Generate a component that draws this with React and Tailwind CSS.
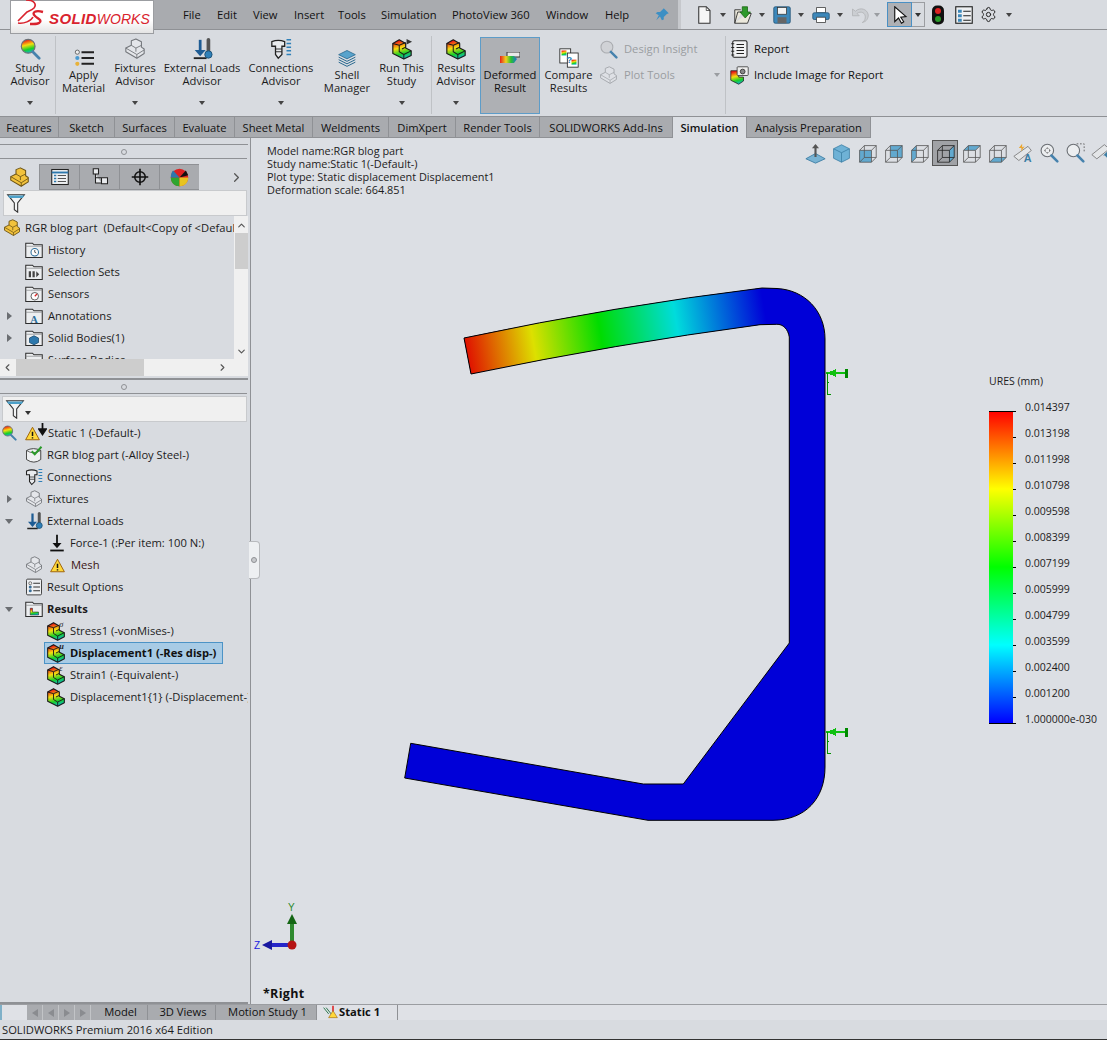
import React from 'react';
import { ChevronLeft, ChevronRight, ChevronUp, ChevronDown, Settings } from 'lucide-react';

const FONT = "font-['Open_Sans','Noto_Sans',sans-serif]";

function Svg({ w = 22, h = 22, vb = '0 0 24 24', className = '', children }) {
  return (
    <svg width={w} height={h} viewBox={vb} className={`shrink-0 ${className}`} fill="none">
      {children}
    </svg>
  );
}

// The L shaped block SOLIDWORKS uses in most of its part icons.
function Block({ fill = '#f2c23c', stroke = '#6d5415', w = 20, h = 20, className = '', children }) {
  return (
    <Svg w={w} h={h} className={className}>
      <path d="M2 11 8 8V3l5-2 6 3v6l3 2v5l-8 5-12-7z" fill={fill} stroke={stroke} strokeWidth="1.2" strokeLinejoin="round" />
      <path d="M2 11l12 7v4M14 18l8-5M8 8l5 3 6-3M13 11v4" stroke={stroke} strokeWidth="1" />
      {children}
    </Svg>
  );
}

const Rainbow = ({ w = 20, h = 20, badge, play }) => (
  <Svg w={w} h={h}>
    <path d="M2 6l7-4 7 4v5l6 3v5l-8 4-12-6z" fill="url(#rb)" stroke="#1a1a1a" strokeWidth="1.3" strokeLinejoin="round" />
    <path d="M9 8l7-3M9 8v7l5 3v5M14 18l8-4M9 8 2 6M12 12l4-2" stroke="#1a1a1a" strokeWidth="1.1" />
    {badge && (
      <text x="16" y="7" fontSize="10" fontStyle="italic" fill="#222" fontFamily="Liberation Serif">
        {badge}
      </text>
    )}
    {play && <path d="M17 1l6 3-6 3z" fill="#333" />}
  </Svg>
);

const GrayBlock = ({ w = 20, h = 20, opacity = 1 }) => (
  <Block fill="#e4e6ea" stroke="#74777c" w={w} h={h} className={opacity < 1 ? 'opacity-50' : ''} />
);

const Warning = ({ size = 16 }) => (
  <Svg w={size} h={size}>
    <path d="M12 2 23 22H1z" fill="#ffd83a" stroke="#a0660c" strokeWidth="1.6" strokeLinejoin="round" />
    <path d="M12 9v7M12 18v2" stroke="#111" strokeWidth="2.4" />
  </Svg>
);

const Folder = ({ children }) => (
  <Svg w={18} h={18}>
    <path d="M1 22V3h9l2 2h11v17z" fill="#eceef0" stroke="#2d2d2d" strokeWidth="1.4" />
    <path d="M1 7h22" stroke="#8b8d90" strokeWidth="1" />
    {children}
  </Svg>
);

const DownForce = () => (
  <>
    <path d="M10 2v14" stroke="#1e5c94" strokeWidth="3" />
    <path d="M4 13h12l-6 7z" fill="#1e5c94" />
    <path d="M3 22h14" stroke="#222" strokeWidth="2" />
  </>
);

const LoadsIcon = ({ size = 22 }) => (
  <Svg w={size} h={size}>
    <DownForce />
    <path d="M19 2v13" stroke="#555" strokeWidth="4" strokeLinecap="round" />
    <circle cx="19" cy="18" r="4" fill="#2f80b8" stroke="#1d4f73" />
  </Svg>
);

const BoltIcon = ({ size = 22 }) => (
  <Svg w={size} h={size}>
    <path d="M2 4q7-3 14 0v5h-3v9l-4 4-3-4V9H2z" fill="#e9ebee" stroke="#222" strokeWidth="1.4" />
    <path d="M6 12h7M6 15h7" stroke="#222" />
    <path d="M18 2h5M18 6h5M18 10h5M18 14h5M18 18h5" stroke="#2f80b8" strokeWidth="1.6" />
  </Svg>
);

const OptionsList = ({ size = 18, color = '#3b6f98' }) => (
  <Svg w={size} h={size}>
    <rect x="2" y="1.5" width="20" height="21" rx="1.5" fill="#eef0f2" stroke="#333" strokeWidth="1.2" />
    <circle cx="7" cy="7" r="2" fill="#eee" stroke="#555" />
    <circle cx="7" cy="12" r="2" fill={color} />
    <circle cx="7" cy="17" r="2" fill={color} />
    <path d="M11 7h9M11 12h9M11 17h9" stroke="#333" strokeWidth="1.4" />
  </Svg>
);

const Magnifier = ({ size = 22, lens = 'url(#rb)', stroke = '#6b6f74', children }) => (
  <Svg w={size} h={size}>
    <circle cx="10" cy="9" r="7.5" fill={lens} stroke={stroke} strokeWidth="1.3" />
    <path d="M15 15l7 7" stroke="#4682ad" strokeWidth="3" strokeLinecap="round" />
    {children}
  </Svg>
);

const RIBBON = [
  { w: 55, pad: 5, lines: ['Study', 'Advisor'], drop: true, sep: true, icon: <Magnifier /> },
  {
    w: 55, lines: ['Apply', 'Material'],
    icon: (
      <Svg w={22} h={20}>
        <circle cx="4" cy="5" r="2.5" fill="#eee" stroke="#555" />
        <circle cx="4" cy="12" r="2.5" fill="#4a9ad0" />
        <circle cx="4" cy="19" r="2.5" fill="#e8b23a" />
        <path d="M9 5h15M9 12h15M9 19h15" stroke="#222" strokeWidth="2.4" />
      </Svg>
    ),
  },
  { w: 48, lines: ['Fixtures', 'Advisor'], drop: true, icon: <GrayBlock w={22} h={22} /> },
  { w: 86, lines: ['External Loads', 'Advisor'], drop: true, icon: <LoadsIcon /> },
  { w: 72, lines: ['Connections', 'Advisor'], drop: true, icon: <BoltIcon /> },
  {
    w: 60, lines: ['Shell', 'Manager'],
    icon: (
      <Svg w={20} h={20}>
        <path d="M12 3l10 5-10 5L2 8z" fill="#58a3cc" stroke="#2b6a90" />
        <path d="M2 11l10 5 10-5M2 14l10 5 10-5M2 17l10 5 10-5" stroke="#2b6a90" strokeWidth="1.2" />
      </Svg>
    ),
  },
  { w: 49, lines: ['Run This', 'Study'], drop: true, sep: true, extra: 5, icon: <Rainbow w={22} h={22} play /> },
  { w: 48, lines: ['Results', 'Advisor'], drop: true, icon: <Rainbow w={22} h={22} /> },
];

function RibbonItem({ w, pad = 0, lines, drop, icon, extra = 0, sep }) {
  return (
    <div className="flex h-full shrink-0 items-start" style={{ width: w + extra + (sep ? 1 : 0) }}>
      <div
        className={`flex flex-col items-center ${drop ? 'pt-[7px]' : 'pt-[16px]'}`}
        style={{ width: w, paddingLeft: pad }}
      >
        <div className="flex h-[24px] items-center">{icon}</div>
        <div className={`whitespace-nowrap text-center text-[11.2px] leading-[13px] text-[#1c1c1c] ${drop ? '' : '-mt-[2.5px]'}`}>
          {lines.map((l) => (
            <div key={l}>{l}</div>
          ))}
        </div>
        {drop && <div className="mt-[14px] h-0 w-0 border-x-[3.5px] border-t-[4px] border-x-transparent border-t-[#444]" />}
      </div>
      {sep && <div className="ml-auto mt-[6px] h-[78px] w-px bg-[#bfc2c6]" />}
    </div>
  );
}

const SMALL_TOOLS = [
  { label: 'Design Insight', icon: <Magnifier size={19} lens="#d0d2d6" stroke="#aaacb0" /> },
  { label: 'Plot Tools', icon: <GrayBlock w={19} h={19} opacity={0.6} />, arrow: true },
];

const TABS = [
  ['Features', 59], ['Sketch', 56], ['Surfaces', 60], ['Evaluate', 60], ['Sheet Metal', 78],
  ['Weldments', 76], ['DimXpert', 67], ['Render Tools', 84], ['SOLIDWORKS Add-Ins', 133],
  ['Simulation', 74, true], ['Analysis Preparation', 124],
];

const MENU = [
  ['File', 34], ['Edit', 36], ['View', 41], ['Insert', 44], ['Tools', 43],
  ['Simulation', 71], ['PhotoView 360', 94], ['Window', 59], ['Help', 40],
];

function Caret({ color = '#444' }) {
  return <div className="h-0 w-0 border-x-[3.5px] border-t-[4px] border-x-transparent" style={{ borderTopColor: color }} />;
}

function Logo() {
  return (
    <div className="relative z-10 ml-[10px] flex h-[34px] w-[144px] shrink-0 items-center border border-[#9b9da1] bg-[linear-gradient(to_bottom,#ffffff_60%,#e4e4e4)] pl-[5px]">
      <Svg w={30} h={30} vb="16 0 30 30" className="-mt-[6px]">
        <path d="M26 1C34 1 37 5 34 9 32 11 29 12 27 13L18 22" stroke="#d9232e" strokeWidth="1.6" />
        <path d="M18 24C24 25 31 22 33 18" stroke="#d9232e" strokeWidth="1.6" />
        <path d="M43 13C36 11 31 13 35 17 38 20 43 21 39 24 37 25.5 33 25 30 25" stroke="#d9232e" strokeWidth="2.4" />
      </Svg>
      <span className="ml-[3px] mt-[3px] whitespace-nowrap leading-none text-[#d9232e] font-['Liberation_Sans',sans-serif]">
        <span className="text-[15px] font-bold italic tracking-[0.4px]">SOLID</span>
        <span className="text-[14px] italic">WORKS</span>
      </span>
    </div>
  );
}

function QuickTool({ children }) {
  return (
    <div className="flex w-[39px] shrink-0 items-center gap-[7px]">
      <Svg w={18} h={18}>{children}</Svg>
      <Caret />
    </div>
  );
}

function TopBar() {
  return (
    <div className="flex h-[30px] shrink-0 border-b border-[#8f9195] bg-[#d8dbe0]">
      <Logo />
      <div className="flex w-[524px] shrink-0 items-center bg-[#a9abaf] pl-[29px]">
        {MENU.map(([m, w]) => (
          <div key={m} className="shrink-0 pt-[1px] text-[11.2px] text-[#111]" style={{ width: w }}>
            {m}
          </div>
        ))}
        <Svg w={15} h={15} className="ml-[10px]">
          <path d="M14 2l8 8-3 1-5 5 0 4-3 1-3-6-6 6 4-8-5-3 3-2 4 0 5-5z" fill="#3c8fc4" />
        </Svg>
      </div>
      <div className="w-[3px] bg-[#c6c8cc]" />
      <div className="flex items-center pl-[14px]">
        <QuickTool>
          <path d="M5 1h10l5 5v17H5z" fill="#f6f6f6" stroke="#333" strokeWidth="1.4" />
          <path d="M15 1v5h5" stroke="#333" />
        </QuickTool>
        <QuickTool>
          <path d="M1 23 5 8h6M1 23V5h8M1 23h17l5-13h-6" fill="#ece9dc" stroke="#333" strokeWidth="1.2" />
          <path d="M11 1h7v7h4l-7 8-7-8h3z" fill="#2f9a2a" stroke="#16620f" />
        </QuickTool>
        <QuickTool>
          <rect x="1" y="1" width="22" height="22" rx="2" fill="#3d88ba" stroke="#1e4f72" />
          <rect x="6" y="2" width="12" height="9" fill="#f2f2f2" stroke="#333" />
          <rect x="6" y="15" width="12" height="8" fill="#666" />
        </QuickTool>
        <QuickTool>
          <path d="M6 2h12v7H6z" fill="#fff" stroke="#333" />
          <rect x="1" y="9" width="22" height="9" rx="2" fill="#3d88ba" stroke="#1e4f72" />
          <path d="M6 15h12v7H6z" fill="#fff" stroke="#333" />
        </QuickTool>
        <div className="flex w-[36px] shrink-0 items-center gap-[5px]">
          <Svg w={18} h={18} className="opacity-50">
            <path d="M2 4v9h9L8 10c5-4 12-1 11 6-.5 3-2 5-4 6 6-1 8-6 8-10C22 4 12 1 6 7z" fill="#bfc2c6" stroke="#888" />
          </Svg>
          <Caret color="#9a9da1" />
        </div>
        <div className="flex h-[25px] items-stretch">
          <div className="flex w-[25px] items-center justify-center border border-[#4a90c4] bg-[#aeb0b4]">
            <Svg w={18} h={18}>
              <path d="M5 1v20l5-5 4 7 3-2-4-6 7-1z" fill="#fff" stroke="#111" strokeWidth="1.5" />
            </Svg>
          </div>
          <div className="flex w-[13px] items-center justify-center border border-l-0 border-[#9b9da1]">
            <Caret color="#333" />
          </div>
        </div>
        <Svg w={14} h={20} vb="0 0 14 20" className="ml-[6px]">
          <rect x="1" y="0.5" width="12" height="19" rx="5" fill="#111" />
          <circle cx="7" cy="6" r="3" fill="#d22" />
          <circle cx="7" cy="14" r="3" fill="#2a9a2a" />
        </Svg>
        <Svg w={18} h={18} className="ml-[10px]">
          <rect x="1" y="1" width="22" height="22" fill="#eef0f2" stroke="#222" strokeWidth="1.5" />
          <path d="M4 5h5v4H4zM4 11h5v4H4zM4 17h5v4H4z" fill="#3d88ba" />
          <path d="M11 7h10M11 13h10M11 19h10" stroke="#222" strokeWidth="1.5" />
        </Svg>
        <Settings size={17} strokeWidth={1.4} className="ml-[7px] text-[#222]" />
        <div className="ml-[9px]"><Caret /></div>
      </div>
    </div>
  );
}

function Ribbon() {
  return (
    <div className="flex h-[86px] shrink-0 bg-[#d8dbe0]">
      {RIBBON.map((r) => (
        <RibbonItem key={r.lines.join()} {...r} />
      ))}
      <div className="mt-[7px] flex h-[77px] w-[60px] shrink-0 flex-col items-center border border-[#5d9cc8] bg-[#aeb0b4] pt-[8px]">
        <div className="flex h-[24px] items-center">
          <svg width="20" height="12" viewBox="0 0 20 12" className="shrink-0">
            <rect x="7" y="0" width="13" height="5" fill="#e8e8e8" stroke="#333" />
            <path d="M0 4h14l3 3-3 4H0z" fill="url(#rbh)" />
          </svg>
        </div>
        <div className="-mt-[2.5px] text-center text-[11.2px] leading-[13px] text-[#111]">
          <div>Deformed</div>
          <div>Result</div>
        </div>
      </div>
      <div className="flex w-[58px] shrink-0 flex-col items-center pr-[1px] pt-[16px]">
        <div className="flex h-[24px] items-center">
          <Svg w={20} h={22}>
            <rect x="1" y="1" width="13" height="17" fill="#fff" stroke="#222" />
            <rect x="10" y="6" width="13" height="17" fill="#fff" stroke="#222" />
            <rect x="3" y="3" width="6" height="6" fill="url(#rb)" />
            <rect x="15" y="14" width="6" height="6" fill="url(#rb)" />
            <text x="9" y="18" fontSize="11" fontWeight="bold" fill="#2a7fb8" fontFamily="Liberation Sans">?</text>
          </Svg>
        </div>
        <div className="-mt-[2.5px] text-center text-[11.2px] leading-[13px] text-[#1c1c1c]">
          <div>Compare</div>
          <div>Results</div>
        </div>
      </div>
      <div className="relative flex w-[127px] shrink-0 flex-col gap-[8px] pl-[1px] pt-[10px]">
        {SMALL_TOOLS.map((t) => (
          <div key={t.label} className="flex h-[18px] items-center gap-[6px] text-[11.2px] text-[#9a9da1]">
            {t.icon}
            <span>{t.label}</span>
            {t.arrow && <div className="ml-auto mr-[5px]"><Caret color="#9a9da1" /></div>}
          </div>
        ))}
      </div>
      <div className="mt-[6px] h-[78px] w-px shrink-0 bg-[#bfc2c6]" />
      <div className="flex flex-col gap-[8px] pl-[4px] pt-[10px]">
        <div className="flex h-[18px] items-center gap-[5px] text-[11.2px] text-[#111]">
          <Svg w={19} h={18}>
            <rect x="3" y="1" width="19" height="22" rx="2" fill="#f2f3f4" stroke="#222" strokeWidth="1.4" />
            <path d="M8 6h10M8 10h10M8 14h10M8 18h10" stroke="#222" strokeWidth="1.4" />
            <path d="M1 5h4M1 10h4M1 15h4M1 20h4" stroke="#222" strokeWidth="1.4" />
          </Svg>
          <span>Report</span>
        </div>
        <div className="flex h-[18px] items-center gap-[5px] text-[11.2px] text-[#111]">
          <Svg w={19} h={19}>
            <path d="M1 6h10v8h6v5l-6 4-10-5z" fill="url(#rb)" stroke="#222" />
            <rect x="9" y="1" width="14" height="11" rx="1" fill="#eee" stroke="#333" />
            <circle cx="16" cy="7" r="3" fill="#888" stroke="#222" />
          </Svg>
          <span>Include Image for Report</span>
        </div>
      </div>
    </div>
  );
}

function Tabs() {
  return (
    <div className="flex h-[22px] shrink-0 border-t border-[#8f9195] bg-[#dcdfe4]">
      {TABS.map(([t, w, active]) => (
        <div
          key={t}
          style={{ width: w }}
          className={`flex shrink-0 items-center justify-center whitespace-nowrap border-r pt-[2px] text-[11.2px] ${
            active
              ? 'border-[#8f9195] bg-[#dcdfe4] font-semibold text-[#111]'
              : 'border-b border-[#8f9195] bg-[#a9abaf] text-[#111]'
          }`}
        >
          {t}
        </div>
      ))}
    </div>
  );
}

function GripRow({ className = '' }) {
  return (
    <div className={`flex items-center justify-center ${className}`}>
      <div className="h-[6px] w-[6px] rounded-full border border-[#8f9195]" />
    </div>
  );
}

function Row({ arrow, indent = 25, icon, text, bold, color }) {
  return (
    <div className="relative flex h-[22px] items-center whitespace-nowrap text-[11.2px] text-[#1c1c1c]">
      {arrow === 'right' && <div className="absolute left-[7px] h-0 w-0 border-y-[4px] border-l-[5px] border-y-transparent border-l-[#6b6e72]" />}
      {arrow === 'down' && <div className="absolute left-[5px] h-0 w-0 border-x-[4.5px] border-t-[5px] border-x-transparent border-t-[#6b6e72]" />}
      <div className="flex shrink-0 items-center" style={{ marginLeft: indent }}>
        {icon}
      </div>
      <span className={`ml-[4px] ${bold ? 'font-bold' : ''}`} style={color ? { color } : undefined}>
        {text}
      </span>
    </div>
  );
}

const FEATURE_ROWS = [
  {
    text: 'History',
    glyph: (
      <>
        <circle cx="13" cy="15" r="5" fill="#fff" stroke="#2d6f9c" strokeWidth="1.4" />
        <path d="M13 12v3l2 1" stroke="#222" />
      </>
    ),
  },
  { text: 'Selection Sets', glyph: <path d="M5 11h3v8H5zM10 11h3v8h-3zM15 11l4 4-4 4z" fill="#444" /> },
  {
    text: 'Sensors',
    glyph: (
      <>
        <circle cx="13" cy="15" r="5" fill="#fff" stroke="#333" />
        <path d="M13 15l3-3" stroke="#d22" strokeWidth="1.6" />
      </>
    ),
  },
  {
    text: 'Annotations', arrow: 'right',
    glyph: <text x="7" y="21" fontSize="14" fontWeight="bold" fill="#2d6f9c" fontFamily="Liberation Serif">A</text>,
  },
  {
    text: 'Solid Bodies(1)', arrow: 'right',
    glyph: <path d="M12 9l6 3v6l-6 3-6-3v-6z" fill="#2d78ad" stroke="#18486b" />,
  },
  { text: 'Surface Bodies', glyph: <path d="M6 20l6-8 7 3-4 6z" fill="#8bb8d6" stroke="#2d6f9c" /> },
];

function FeatureTree() {
  return (
    <div className="relative h-[160px] shrink-0 overflow-hidden">
      <div className="h-[143px] overflow-hidden pr-[14px] pt-[1px]">
        <div className="flex h-[22px] items-center whitespace-nowrap pl-[3px] text-[11.2px] text-[#1c1c1c]">
          <Block w={18} h={18} />
          <span className="ml-[4px] overflow-hidden tracking-[0.05px]">RGR blog part&nbsp;&nbsp;(Default&lt;Copy of &lt;Default</span>
        </div>
        {FEATURE_ROWS.map((r) => (
          <Row
            key={r.text}
            arrow={r.arrow}
            text={<span className="ml-[1px]">{r.text}</span>}
            icon={<Folder>{r.glyph}</Folder>}
          />
        ))}
      </div>
      {/* vertical scrollbar */}
      <div className="absolute right-0 top-0 flex h-[143px] w-[14px] flex-col items-center justify-between bg-[#f0f0f0]">
        <ChevronUp size={11} strokeWidth={2.5} className="mt-[4px] text-[#555]" />
        <ChevronDown size={11} strokeWidth={2.5} className="mb-[2px] text-[#555]" />
      </div>
      <div className="absolute right-0 top-[17px] h-[36px] w-[13px] bg-[#cdcdcd]" />
      {/* horizontal scrollbar */}
      <div className="absolute bottom-0 left-0 flex h-[17px] w-full items-center bg-[#f0f0f0]">
        <ChevronLeft size={11} strokeWidth={2.5} className="ml-[2px] text-[#555]" />
        <div className="ml-[3px] h-full w-[128px] bg-[#cdcdcd]" />
        <ChevronRight size={11} strokeWidth={2.5} className="ml-[73px] text-[#555]" />
      </div>
    </div>
  );
}

function ManagerTabs() {
  return (
    <div className="flex h-[26px] shrink-0 items-stretch">
      <div className="flex w-[39px] items-center justify-center"><Block w={21} h={21} /></div>
      {[
        <Svg key="a" w={18} h={18}>
          <rect x="1" y="2" width="22" height="20" fill="#eef0f2" stroke="#222" strokeWidth="1.4" />
          <path d="M1 6h22" stroke="#2d78ad" strokeWidth="2.5" />
          <path d="M4 10h3M4 14h3M4 18h3" stroke="#2d78ad" strokeWidth="2" />
          <path d="M9 10h11M9 14h11M9 18h11" stroke="#222" />
        </Svg>,
        <Svg key="b" w={18} h={18}>
          <path d="M3 1h7v7H3zM14 13h8v8h-8zM6 8v12h8M6 13h8" fill="#e8eaed" stroke="#222" strokeWidth="1.4" />
        </Svg>,
        <Svg key="c" w={18} h={18}>
          <circle cx="12" cy="12" r="7" stroke="#111" strokeWidth="2" />
          <path d="M12 1v22M1 12h22" stroke="#111" strokeWidth="2.2" />
        </Svg>,
        <Svg key="d" w={19} h={19}>
          <circle cx="12" cy="12" r="11" fill="#d22" />
          <path d="M12 12 20 3l3 6z" fill="#111" />
          <path d="M12 12H1c0 7 5 11 11 11z" fill="#2fa52f" />
          <path d="M12 12h11c0 7-5 11-11 11z" fill="#e8c420" />
          <path d="M12 12 4 3c-2 2-3 5-3 9z" fill="#2d78ad" />
        </Svg>,
      ].map((icon, i) => (
        <div key={i} className="flex w-[40px] items-center justify-center border-y border-l border-[#8f9195] bg-[#a9abaf] last:border-r">
          {icon}
        </div>
      ))}
      <div className="ml-auto mr-[3px] flex items-center">
        <ChevronRight size={15} strokeWidth={2} className="text-[#555]" />
      </div>
    </div>
  );
}

const FilterFunnel = ({ size = 20 }) => (
  <Svg w={size} h={size}>
    <path d="M2 2h20l-8 10v11l-4-3v-8z" fill="#f3f4f5" stroke="#333" strokeWidth="1.3" />
    <path d="M2 3h20l-2 3H4z" fill="#4da0c8" />
  </Svg>
);

function SimulationTree() {
  return (
    <div className="mr-[2px] overflow-hidden">
      <div className="relative flex h-[22px] items-center whitespace-nowrap text-[11.2px] text-[#1c1c1c]">
        <div className="ml-[1px] flex w-[24px]"><Magnifier size={16} /></div>
        <Warning size={15} />
        <Svg w={9} h={14} vb="0 0 10 16" className="-ml-[2px] -mt-[7px]">
          <path d="M5 0v9M1 7h8L5 13z" stroke="#111" strokeWidth="2" fill="#111" />
        </Svg>
        <span className="ml-[1px]">Static 1 (-Default-)</span>
      </div>
      <Row
        text="RGR blog part (-Alloy Steel-)"
        icon={
          <Svg w={18} h={18}>
            <path d="M2 6q9-5 19 0v12q-9 7-19 0z" fill="#eef0f2" stroke="#444" strokeWidth="1.3" />
            <path d="M2 6q9 6 19 0" stroke="#444" />
            <path d="M9 7l4 4 9-10" stroke="#2a9a2a" strokeWidth="2.6" />
          </Svg>
        }
      />
      <Row text="Connections" icon={<BoltIcon size={18} />} />
      <Row text="Fixtures" arrow="right" icon={<GrayBlock w={18} h={18} />} />
      <Row text="External Loads" arrow="down" icon={<LoadsIcon size={18} />} />
      <Row
        indent={48}
        text="Force-1 (:Per item: 100 N:)"
        icon={
          <Svg w={18} h={18}>
            <path d="M12 1v15" stroke="#111" strokeWidth="2.4" />
            <path d="M6 12h12l-6 7z" fill="#111" />
            <path d="M3 22h18" stroke="#111" strokeWidth="2.4" />
          </Svg>
        }
      />
      <div className="flex h-[22px] items-center text-[11.2px] text-[#3a1414]">
        <div className="ml-[25px] w-[25px]"><GrayBlock w={18} h={18} /></div>
        <Warning size={15} />
        <span className="ml-[6px]">Mesh</span>
      </div>
      <Row text="Result Options" icon={<OptionsList />} />
      <Row
        text="Results"
        bold
        arrow="down"
        icon={
          <Folder>
            <path d="M7 11h3v5h8v4H7z" fill="url(#rb)" stroke="#222" strokeWidth=".7" />
          </Folder>
        }
      />
      <Row indent={46} text="Stress1 (-vonMises-)" icon={<Rainbow badge="σ" />} />
      <div className="ml-[44px] flex h-[22px] w-[179px] items-center whitespace-nowrap border border-[#4c93c6] bg-[#a8cbe5] pl-[1px] text-[11.2px] font-bold text-[#111]">
        <Rainbow badge="u" />
        <span className="ml-[4px]">Displacement1 (-Res disp-)</span>
      </div>
      <Row indent={46} text="Strain1 (-Equivalent-)" icon={<Rainbow badge="ε" />} />
      <Row indent={46} text="Displacement1{1} (-Displacement-)" icon={<Rainbow />} />
    </div>
  );
}

function LeftPanel() {
  return (
    <div className="relative z-10 flex w-[251px] shrink-0 flex-col border-r border-[#8f9195] bg-[#d8dbe0]">
      <div className="mr-[2px] h-[7px] border-b border-[#8f9195]" />
      <GripRow className="mr-[3px] h-[14px] border-b border-[#8f9195]" />
      <div className="mr-[3px] mt-[5px]"><ManagerTabs /></div>
      <div className="ml-[3px] mr-[3px] flex h-[26px] shrink-0 items-center border border-[#c8cacd] bg-[#f0f0f0] pl-[2px]">
        <FilterFunnel />
      </div>
      <div className="mr-[2px]"><FeatureTree /></div>
      <div className="mr-[2px] mt-[2px] h-[2px] bg-[#8f9195]" />
      <GripRow className="mr-[3px] h-[14px] border-b border-[#8f9195]" />
      <div className="ml-[2px] mr-[3px] mt-[2px] flex h-[26px] shrink-0 items-center border border-[#c8cacd] bg-[#f0f0f0] pl-[2px]">
        <FilterFunnel />
        <div className="mt-[8px]"><Caret color="#333" /></div>
      </div>
      <SimulationTree />
      <div className="mt-auto mr-[2px] h-[2px] bg-[#8f9195]" />
      {/* handle that collapses the panel */}
      <div className="absolute left-[249px] top-[403px] flex h-[38px] w-[11px] items-center justify-center rounded-r-sm border border-l-0 border-[#b8babd] bg-[#eef0f2]">
        <div className="h-[6px] w-[6px] rounded-full border border-[#8f9195] bg-[#c8cacd]" />
      </div>
    </div>
  );
}

// Wireframe cube of the view toolbar, `face` is the one that is painted.
function Cube({ face, dark }) {
  const s = dark ? '#222' : '#555';
  const faces = {
    front: 'M2 8h15v15H2z',
    back: 'M8 2h15v15H8z',
    left: 'M2 8l6-6v15l-6 6z',
    right: 'M17 8l6-6v15l-6 6z',
    top: 'M2 8l6-6h15l-6 6z',
    bottom: 'M2 23l6-6h15l-6 6z',
  };
  return (
    <Svg w={19} h={19}>
      <path d={faces[face]} fill="#62a9cf" />
      <path d="M2 8h15v15H2zM8 2h15v15H8zM2 8l6-6M17 8l6-6M2 23l6-6M17 23l6-6" stroke={s} strokeWidth="1" />
    </Svg>
  );
}

function ViewBar() {
  const items = [
    <Svg key="plane" w={21} h={21}>
      <path d="M1 18l11-6 11 6-11 5z" fill="#79b3d3" stroke="#3c7da3" />
      <path d="M12 16V3" stroke="#555" strokeWidth="2.4" />
      <path d="M8 6l4-5 4 5z" fill="#555" />
    </Svg>,
    <Svg key="solid" w={19} h={19}>
      <path d="M12 1l10 5v12l-10 5-10-5V6z" fill="#6fb2d6" stroke="#3a7da4" />
      <path d="M2 6l10 5 10-5M12 11v12" stroke="#3a7da4" />
    </Svg>,
    <Cube key="1" face="front" />,
    <Cube key="2" face="back" />,
    <Cube key="3" face="left" />,
    <Cube key="4" face="right" dark />,
    <Cube key="5" face="top" />,
    <Cube key="6" face="bottom" />,
    <Svg key="hl" w={20} h={20}>
      <path d="M1 16l17-12 4 5-15 12z" fill="#e4e6e8" stroke="#777" />
      <path d="M7 6l4-5 0 4 3-1-4 6 0-4z" fill="#eba52d" />
      <text x="13" y="23" fontSize="13" fontWeight="bold" fill="#3c7da3" fontFamily="Liberation Sans">A</text>
    </Svg>,
    <Magnifier key="m1" size={20} lens="#eceef0">
      <path d="M10 5l2 2H8zM10 13l2-2H8zM6 9l2-2v4zM14 9l-2-2v4z" fill="#777" />
    </Magnifier>,
    <Magnifier key="m2" size={20} lens="#eceef0">
      <path d="M14 1h9v9" stroke="#555" strokeDasharray="2 2" />
    </Magnifier>,
    <Svg key="cut" w={20} h={20}>
      <path d="M1 14l15-12 6 5-15 12z" fill="#e4e6e8" stroke="#777" />
      <path d="M24 14h-7l4-4M17 14l4 4" stroke="#3c7da3" strokeWidth="2" />
    </Svg>,
  ];
  return (
    <div className="absolute left-[551px] top-[2px] flex h-[26px] items-center">
      {items.map((it, i) => (
        <div
          key={i}
          className={`flex h-[26px] w-[26px] shrink-0 items-center justify-center ${
            i === 5 ? 'border border-[#555] bg-[#a0a2a6]' : ''
          }`}
        >
          {it}
        </div>
      ))}
    </div>
  );
}

const LEGEND = [
  '0.014397', '0.013198', '0.011998', '0.010798', '0.009598', '0.008399', '0.007199',
  '0.005999', '0.004799', '0.003599', '0.002400', '0.001200', '1.000000e-030',
];

function Legend() {
  return (
    <div className="absolute left-[738px] top-[236px] w-[115px] text-[#1c1c1c]">
      <div className="pt-[1px] text-[10.5px] leading-[13px]">URES (mm)</div>
      <div className="relative mt-[23px] flex h-[312px]">
        <div className="h-full w-[24px] bg-[linear-gradient(to_bottom,#ff0000,#ffff00_25%,#00ff00_50%,#00ffff_75%,#0000ff)]" />
        <div className="flex h-full flex-col justify-between">
          {LEGEND.map((v, i) => (
            <div key={v} className="flex h-0 items-center overflow-visible">
              <div className={`h-px bg-black ${i === 0 || i === 12 ? 'ml-[-24px] w-[27px]' : 'w-[3px]'}`} />
              <span className="-mt-[8px] ml-[9px] text-[10.5px] leading-[13px]">{v}</span>
            </div>
          ))}
        </div>
      </div>
    </div>
  );
}

function Fixture({ y }) {
  return (
    <g transform={`translate(0 ${y})`} shapeRendering="crispEdges" fill="none">
      <path d="M826 374h20" stroke="#10c010" strokeWidth="2" />
      <path d="M827 374l9-4v8z" fill="#10c010" />
      <path d="M845 370h3v9h-3z" fill="#008a00" />
      <path d="M827 374v21h4M827 383h2" stroke="#009000" strokeWidth="1" />
    </g>
  );
}

const PART =
  'M464 339Q615 307 762 289L777 289.5C805 291 825 312 825 340V768C825 800 805 821 773 821.3H648L404.7 779L410.7 744.3L643.3 785H683.3L789.3 644V338C788 330 783 325 776.7 325.3L760 325.7Q615 345 471 375Z';

// Plot drawn in page coordinates so the numbers read off the screenshot stay usable.
function Plot() {
  return (
    <svg className="absolute inset-0 h-full w-full" viewBox="251 139 856 866" fill="none">
      <defs>
        <linearGradient id="deform" gradientUnits="userSpaceOnUse" x1="467" y1="357" x2="770" y2="306">
          <stop offset="0" stopColor="#e01000" />
          <stop offset="0.22" stopColor="#dde000" />
          <stop offset="0.44" stopColor="#00dc00" />
          <stop offset="0.69" stopColor="#00dcdc" />
          <stop offset="0.98" stopColor="#0000d8" />
        </linearGradient>
      </defs>
      <path d={PART} fill="#0000d8" />
      <path d="M464 339Q615 307 762 289L777 289.5V325.3L760 325.7Q615 345 471 375Z" fill="url(#deform)" />
      <path d={PART} stroke="#000" strokeWidth="1" />
      <Fixture y={0} />
      <Fixture y={359} />
      {/* triad */}
      <path d="M292 946V922" stroke="#2f8a2f" strokeWidth="4" />
      <path d="M287 925l5-10 5 10z" fill="#146614" />
      <path d="M292 946H270" stroke="#2626c8" strokeWidth="4" />
      <path d="M272 941l-10 5 10 5z" fill="#1818a0" />
      <circle cx="292" cy="946" r="4.5" fill="#b51414" />
      <text x="288" y="912" fontSize="10" fill="#2a8a2a" fontFamily="Liberation Sans">Y</text>
      <text x="254" y="950" fontSize="10" fill="#2020e0" fontFamily="Liberation Sans">Z</text>
    </svg>
  );
}

function Viewport() {
  return (
    <div className="relative min-w-0 flex-1 overflow-hidden bg-[#dcdfe4]">
      <Plot />
      <ViewBar />
      <div className="absolute left-[16px] top-[6px] whitespace-nowrap text-[10.9px] leading-[13px] text-[#1c1c1c]">
        <div>Model name:RGR blog part</div>
        <div>Study name:Static 1(-Default-)</div>
        <div>Plot type: Static displacement Displacement1</div>
        <div>Deformation scale: 664.851</div>
      </div>
      <Legend />
      <div className="absolute left-[12px] top-[848px] text-[12.5px] font-bold leading-[16px] tracking-[0.3px] text-[#111]">*Right</div>
    </div>
  );
}

function BottomTabs() {
  return (
    <div className="flex h-[16px] shrink-0 items-stretch border-t border-[#9b9da1] bg-[#dfe1e6]">
      <div className="w-[27px] border-l-2 border-l-[#7fb0c8]" />
      <div className="flex w-[64px] items-stretch bg-[#a9abaf]">
        {['M', 'L', 'R', 'E'].map((k, i) => (
          <div key={k} className="flex flex-1 items-center justify-center border-r border-[#c2c4c7]">
            <div
              className={`h-0 w-0 border-y-[4px] border-y-transparent ${
                i < 2 ? 'border-r-[6px] border-r-[#8a8c90]' : 'border-l-[6px] border-l-[#8a8c90]'
              }`}
            />
          </div>
        ))}
      </div>
      {[['Model', 57], ['3D Views', 68], ['Motion Study 1', 101]].map(([t, w]) => (
        <div key={t} style={{ width: w }} className="flex items-center justify-center border-r border-[#8f9195] bg-[#a9abaf] pb-[1px] pl-[3px] text-[11.2px] text-[#111]">
          {t}
        </div>
      ))}
      <div className="flex w-[81px] items-center gap-[1px] border-r border-[#8f9195] pb-[1px] pl-[6px] text-[11.2px] font-bold text-[#111]">
        <Svg w={15} h={14} vb="0 0 24 20">
          <path d="M1 3l8 10M5 3l8 10" stroke="#2f7a50" strokeWidth="1.6" />
          <path d="M16 0v9" stroke="#d22" strokeWidth="2.5" />
          <path d="M16 8l7 11H9z" fill="#ffd83a" stroke="#a0660c" />
        </Svg>
        <span>Static 1</span>
      </div>
    </div>
  );
}

export default function App() {
  return (
    <div className={`relative flex h-[1040px] w-[1107px] flex-col overflow-hidden bg-[#d8dbe0] ${FONT}`}>
      <svg className="absolute h-0 w-0">
        <defs>
          <linearGradient id="rb" x1="0.35" y1="0" x2="0.6" y2="1">
            <stop offset="0.05" stopColor="#ee1a14" />
            <stop offset="0.4" stopColor="#f5dc10" />
            <stop offset="0.72" stopColor="#18d028" />
            <stop offset="1" stopColor="#10b0d8" />
          </linearGradient>
          <linearGradient id="rbh" x1="0" y1="0" x2="1" y2="0">
            <stop offset="0" stopColor="#e8201a" />
            <stop offset="0.35" stopColor="#f0d020" />
            <stop offset="0.65" stopColor="#28c030" />
            <stop offset="1" stopColor="#1c70d8" />
          </linearGradient>
        </defs>
      </svg>
      <TopBar />
      <Ribbon />
      <Tabs />
      <div className="flex min-h-0 flex-1">
        <LeftPanel />
        <Viewport />
      </div>
      <BottomTabs />
      <div className="flex h-[20px] shrink-0 items-center border-b border-[#333] bg-[#d8dbe0] pl-[2px] pt-[2px] text-[11.2px] text-[#1c1c1c]">
        SOLIDWORKS Premium 2016 x64 Edition
      </div>
    </div>
  );
}
